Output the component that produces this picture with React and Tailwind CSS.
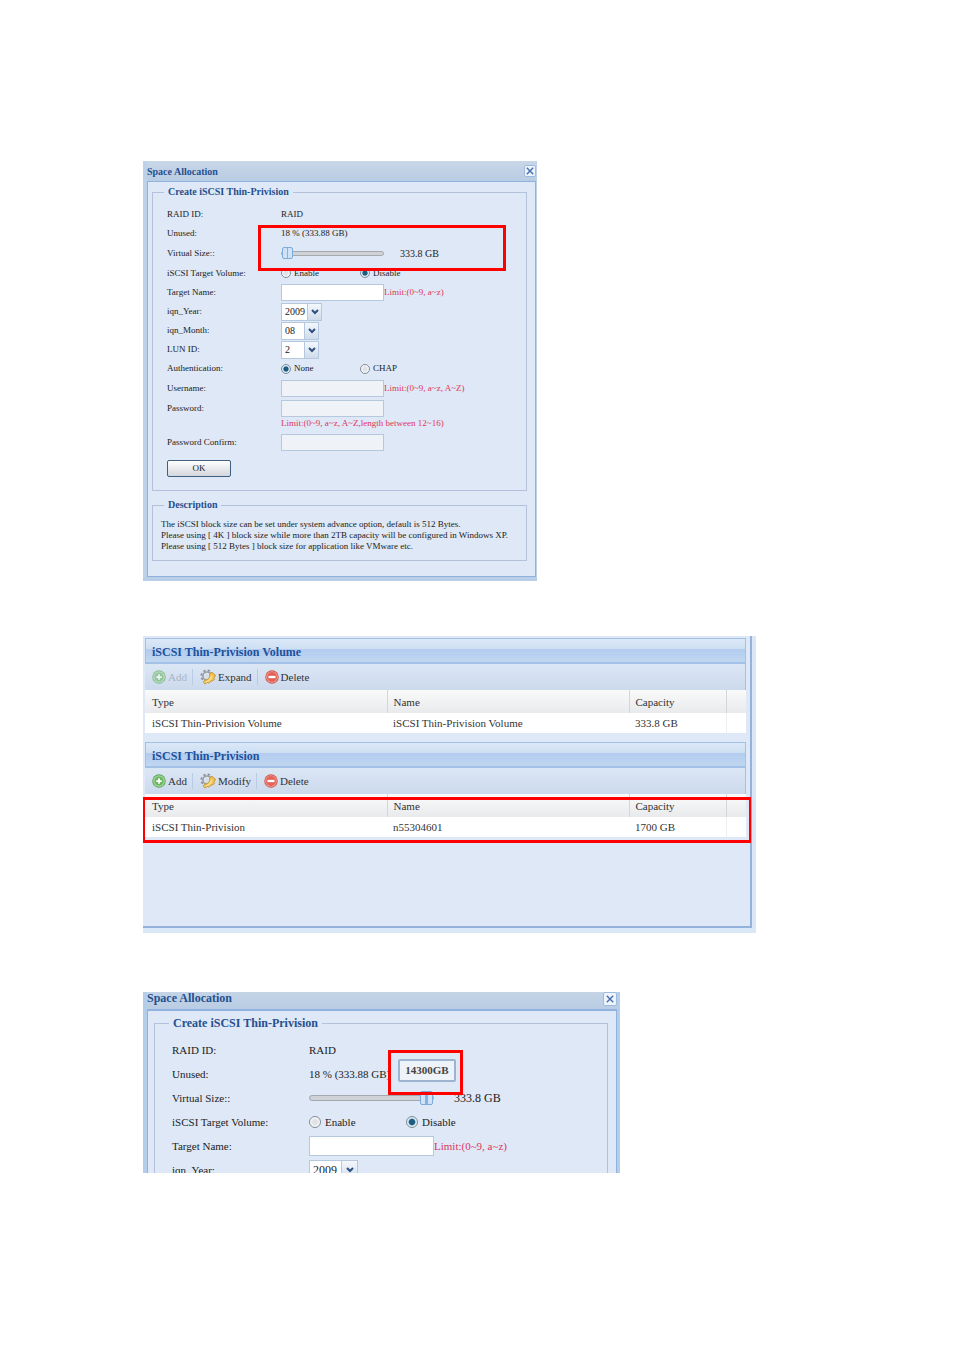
import { useId, useState } from 'react';
import clsx from 'clsx';

const CloseButton = ({ large }) => (
  <button
    type="button"
    aria-label="Close"
    className={clsx(
      'flex items-center justify-center rounded-xs border border-[#9dbbe0] bg-[#eef4fc]',
      large ? 'size-[14px]' : 'size-3'
    )}
  >
    <svg viewBox="0 0 10 10" className="size-2" fill="none" stroke="#4a6fae" strokeWidth="1.8">
      <path d="M1 1l8 8M9 1l-8 8" />
    </svg>
  </button>
);

const AddIcon = () => (
  <svg viewBox="0 0 16 16" className="size-[14px]">
    <circle cx="8" cy="8" r="7.7" fill="#5aa455" />
    <circle cx="8" cy="8" r="6.7" fill="#a5d69b" />
    <circle cx="8" cy="8" r="5.2" fill="#69b562" />
    <path d="M8 4.8v6.4M4.800 8h6.400" stroke="#fff" strokeWidth="2" />
  </svg>
);

const GearIcon = () => (
  <svg viewBox="0 0 16 16" className="size-4" fill="none">
    <circle cx="7" cy="7" r="5.6" stroke="#8d9199" strokeWidth="2" strokeDasharray="2.2 2.2" />
    <circle cx="7" cy="7" r="4" fill="#dfe3e8" stroke="#9a9ea6" strokeWidth="1.600" />
    <path
      d="M4.500 14.800c-1-.6-1.300-1.700-.6-2.700l2.300-1.300c1.700-.4 2.900-1.500 3.300-3.300l.4-3.300 2.700-.6 1 1.700 1.700.6-.3 2-1.200 1 .5 1.800-1.700 1.300-1.600-.3-1 1.700-2 .6-1-1-1 1.600z"
      fill="#f4c654"
      stroke="#c08c2c"
      strokeWidth=".8"
    />
    <path d="M6 12.800c2.600-.4 4.800-2.300 5.400-5.400" stroke="#fbe6a0" strokeWidth="1.200" />
    <circle cx="7.200" cy="7.200" r="1.700" fill="#d3deee" />
  </svg>
);

const DeleteIcon = () => (
  <svg viewBox="0 0 16 16" className="size-[14px]">
    <circle cx="8" cy="8" r="7.7" fill="#d0574c" />
    <circle cx="8" cy="8" r="6.7" fill="#f09a90" />
    <circle cx="8" cy="8" r="5.600" fill="#e2645a" />
    <path d="M4 8h8" stroke="#fff" strokeWidth="2.600" />
  </svg>
);

const Fieldset = ({ legend, large, className, children }) => (
  <fieldset className={clsx('min-w-0 border border-[#b3c1dc]', className)}>
    <legend
      className={clsx(
        'px-1 font-bold text-[#26508f]',
        large ? 'ml-[14px] text-xs leading-4' : 'ml-[11px] text-[10px] leading-[14px]'
      )}
    >
      {legend}
    </legend>
    {children}
  </fieldset>
);

const Row = ({ label, htmlFor, large, tall, children }) => (
  <div className={clsx('flex items-center', large ? 'h-6' : tall ? 'h-5' : 'h-[19px]')}>
    {htmlFor ? (
      <label htmlFor={htmlFor} className={clsx('shrink-0', large ? 'w-[137px]' : 'w-[114px]')}>
        {label}
      </label>
    ) : (
      <span className={clsx('shrink-0', large ? 'w-[137px]' : 'w-[114px]')}>{label}</span>
    )}
    {children}
  </div>
);

const TextBox = ({ large, disabled, ...props }) => (
  <input
    disabled={disabled}
    className={clsx(
      'border border-[#b5c8dd] px-1 outline-none',
      large ? 'h-5 w-[125px]' : 'h-[17px] w-[103px]',
      disabled ? 'bg-[#eff3f8]' : 'bg-white'
    )}
    {...props}
  />
);

const Dropdown = ({ id, value, wide, large }) => (
  <span
    className={clsx(
      'relative flex border border-[#b5c8dd] bg-white',
      large ? 'h-5 w-[49px] text-xs' : 'h-[18px] text-[10px]',
      !large && (wide ? 'w-[41px]' : 'w-[38px]')
    )}
  >
    <select id={id} defaultValue={value} className="w-full appearance-none bg-transparent pl-[3px] outline-none">
      <option>{value}</option>
    </select>
    <span
      className={clsx(
        'pointer-events-none absolute inset-y-0 right-0 flex items-center justify-center border-l border-[#b5c8dd] bg-linear-to-b from-[#f4f8fd] to-[#cfdcec]',
        large ? 'w-4' : 'w-[14px]'
      )}
    >
      <svg viewBox="0 0 8 6" className="h-[6px] w-2" fill="none" stroke="#2f4f7f" strokeWidth="2">
        <path d="M1 1l3 3 3-3" />
      </svg>
    </span>
  </span>
);

const RadioPair = ({ name, options, checked, large }) => {
  const [value, setValue] = useState(checked);

  return options.map((option) => (
    <label
      key={option}
      className={clsx('flex items-center', large ? 'w-[97px] gap-1' : 'w-[79px] gap-[3px]')}
    >
      <input
        type="radio"
        name={name}
        checked={value === option}
        onChange={() => setValue(option)}
        className={clsx(
          'appearance-none rounded-full border border-[#7f8c99] bg-[radial-gradient(circle,#dfe1e4_30%,#fafbfc_70%)] checked:bg-[radial-gradient(circle,#1c5c80_38%,#dcebf5_55%)]',
          large ? 'size-3' : 'size-[10px]'
        )}
      />
      {option}
    </label>
  ));
};

const SizeSlider = ({ id, value, large }) => (
  <input
    id={id}
    type="range"
    defaultValue={value}
    className={clsx(
      'appearance-none rounded-sm border border-[#a4a9b0] bg-[#cfd2d6]',
      '[&::-webkit-slider-thumb]:appearance-none [&::-webkit-slider-thumb]:rounded-xs [&::-webkit-slider-thumb]:border [&::-webkit-slider-thumb]:border-[#7fabdc]',
      '[&::-webkit-slider-thumb]:bg-[linear-gradient(90deg,#cfe3f8_40%,#86b1e0_40%,#86b1e0_60%,#cfe3f8_60%)]',
      large
        ? 'h-[6px] w-[125px] [&::-webkit-slider-thumb]:h-[14px] [&::-webkit-slider-thumb]:w-[13px]'
        : 'h-[5px] w-[103px] [&::-webkit-slider-thumb]:h-3 [&::-webkit-slider-thumb]:w-[11px]'
    )}
  />
);

const Hint = ({ children }) => <span className="whitespace-nowrap text-[#e0355a]">{children}</span>;

// Rows shared by both states of the space allocation dialog
const VolumeRows = ({ id, large, slider }) => (
  <>
    <Row label="RAID ID:" large={large} tall>RAID</Row>
    <Row label="Unused:" large={large}>18 % (333.88 GB)</Row>
    <Row label="Virtual Size::" htmlFor={`${id}-size`} large={large} tall>
      <SizeSlider id={`${id}-size`} value={slider} large={large} />
      <span className={large ? 'ml-5 text-xs' : 'ml-4 text-[10px]'}>333.8 GB</span>
    </Row>
    <Row label="iSCSI Target Volume:" large={large} tall>
      <RadioPair name={`${id}-target`} options={['Enable', 'Disable']} checked="Disable" large={large} />
    </Row>
    <Row label="Target Name:" htmlFor={`${id}-name`} large={large}>
      <TextBox id={`${id}-name`} large={large} />
      <Hint>Limit:(0~9, a~z)</Hint>
    </Row>
    <Row label="iqn_Year:" htmlFor={`${id}-year`} large={large}>
      <Dropdown id={`${id}-year`} value="2009" wide large={large} />
    </Row>
  </>
);

const AllocationDialog = () => {
  const id = useId();

  return (
    <section className="relative w-full max-w-[394px] border-b-4 border-[#b9cfe7] bg-[#bdd1e8] pr-px pl-1 text-[9px] leading-[11px]">
      <header className="flex h-5 items-center justify-between bg-linear-to-b from-[#c9d7e8] to-[#b8cce3]">
        <h2 className="text-[10px] font-bold text-[#26508f]">Space Allocation</h2>
        <CloseButton />
      </header>
      <div className="border border-[#8fb3de] bg-[#dee8f6] pt-[3px] pr-2 pb-[15px] pl-1">
        <Fieldset legend="Create iSCSI Thin-Privision" className="pb-[13px]">
          <form className="pt-[5px] pl-[14px]">
            <VolumeRows id={id} slider={0} />
            <Row label="iqn_Month:" htmlFor={`${id}-month`}>
              <Dropdown id={`${id}-month`} value="08" />
            </Row>
            <Row label="LUN ID:" htmlFor={`${id}-lun`}>
              <Dropdown id={`${id}-lun`} value="2" />
            </Row>
            <Row label="Authentication:">
              <RadioPair name={`${id}-auth`} options={['None', 'CHAP']} checked="None" />
            </Row>
            <Row label="Username:" htmlFor={`${id}-user`} tall>
              <TextBox id={`${id}-user`} disabled />
              <Hint>Limit:(0~9, a~z, A~Z)</Hint>
            </Row>
            <Row label="Password:" htmlFor={`${id}-password`} tall>
              <TextBox id={`${id}-password`} type="password" disabled />
            </Row>
            <p className="mb-1 pl-[114px]">
              <Hint>Limit:(0~9, a~z, A~Z,length between 12~16)</Hint>
            </p>
            <Row label="Password Confirm:" htmlFor={`${id}-confirm`}>
              <TextBox id={`${id}-confirm`} type="password" disabled />
            </Row>
            <button
              type="button"
              className="mt-2 block h-[17px] w-16 rounded-xs border border-[#3f5f80] bg-linear-to-b from-white to-[#d3d6dc]"
            >
              OK
            </button>
          </form>
        </Fieldset>
        <Fieldset legend="Description" className="mt-[7px] pb-2">
          <p className="pt-[7px] pl-2">
            The iSCSI block size can be set under system advance option, default is 512 Bytes.
            <br />
            Please using [ 4K ] block size while more than 2TB capacity will be configured in Windows XP.
            <br />
            Please using [ 512 Bytes ] block size for application like VMware etc.
          </p>
        </Fieldset>
      </div>
      <div className="pointer-events-none absolute top-16 left-[115px] h-[46px] w-[248px] border-3 border-[#ff0000]" />
    </section>
  );
};

const ToolbarButton = ({ icon: Icon, label, disabled }) => (
  <button
    type="button"
    disabled={disabled}
    className="flex items-center gap-[2px] disabled:text-[#a9b4c4] [&:disabled_svg]:opacity-60"
  >
    <Icon />
    {label}
  </button>
);

const Separator = () => <span className="mr-[7px] ml-[5px] h-4 w-px bg-[#b9cbe2]" />;

const VolumePanel = ({ title, action, addDisabled, row, highlight }) => (
  <section>
    <h2 className="flex h-[26px] items-center border border-b-2 border-[#a3c0e6] bg-[linear-gradient(#dbe8f8,#cddff3_45%,#b3ccef_45%,#c0d7f0)] px-[6px] pt-[2px] text-xs font-bold text-[#20509c]">
      {title}
    </h2>
    <div className="flex h-[26px] items-center border-r border-[#a3c0e6] bg-linear-to-b from-[#dce7f5] to-[#ccdaed] pl-[7px]">
      <ToolbarButton icon={AddIcon} label="Add" disabled={addDisabled} />
      <Separator />
      <ToolbarButton icon={GearIcon} label={action} />
      <Separator />
      <ToolbarButton icon={DeleteIcon} label="Delete" />
    </div>
    <div className="relative">
      <table className="w-full table-fixed border-collapse text-left">
        <colgroup>
          <col className="w-[242px]" />
          <col className="w-[242px]" />
          <col className="w-[97px]" />
          <col />
        </colgroup>
        <thead>
          <tr className="h-[23px] bg-linear-to-b from-[#fafafa] to-[#e8eaec]">
            {['Type', 'Name', 'Capacity'].map((heading) => (
              <th key={heading} className="border-r border-[#d3d6da] pl-[6px] font-normal first:pl-[7px]">
                {heading}
              </th>
            ))}
            <th />
          </tr>
        </thead>
        <tbody>
          <tr className="h-5 bg-white">
            {row.map((cell, index) => (
              <td key={index} className={clsx('pl-[6px] first:pl-[7px]', index === 2 && 'border-r border-[#edf0f3]')}>
                {cell}
              </td>
            ))}
            <td />
          </tr>
        </tbody>
      </table>
      {highlight && (
        <div className="pointer-events-none absolute top-[3px] -right-[5px] -left-[2px] h-[46px] border-x-2 border-y-3 border-[#ff0000]" />
      )}
    </div>
  </section>
);

const VolumeList = () => (
  <section className="w-full max-w-[613px] bg-[#dae7f7] pr-1 pb-[5px] text-[11px] leading-[14px] text-[#333]">
    <div className="border-r-2 border-b-2 border-[#94b2da] bg-[#dee8f6] pt-[2px] pr-1 pb-[89px] pl-[2px]">
      <VolumePanel
        title="iSCSI Thin-Privision Volume"
        action="Expand"
        addDisabled
        row={['iSCSI Thin-Privision Volume', 'iSCSI Thin-Privision Volume', '333.8 GB']}
      />
      <div className="h-[9px]" />
      <VolumePanel
        title="iSCSI Thin-Privision"
        action="Modify"
        row={['iSCSI Thin-Privision', 'n55304601', '1700 GB']}
        highlight
      />
    </div>
  </section>
);

const ResizeDialog = () => {
  const id = useId();

  return (
    <section className="relative max-h-[181px] w-full max-w-[477px] overflow-hidden bg-[#b4cde9] pr-[3px] pl-1 text-[11px] leading-[13px]">
      <header className="flex h-[17px] items-start justify-between bg-linear-to-b from-[#c5d5e7] to-[#b8cce3]">
        <h2 className="text-xs leading-3 font-bold text-[#26508f]">Space Allocation</h2>
        <CloseButton large />
      </header>
      <div className="border border-t-2 border-[#8fb3de] bg-[#dee8f6] pt-1 pr-2 pl-[6px]">
        <Fieldset legend="Create iSCSI Thin-Privision" large>
          <form className="pt-[7px] pl-[17px]">
            <VolumeRows id={id} slider={100} large />
          </form>
        </Fieldset>
      </div>
      <output
        htmlFor={`${id}-size`}
        className="absolute top-[67px] left-[255px] flex h-[23px] w-[58px] items-center justify-center rounded-xs border-2 border-[#9db4d0] bg-[#eef3fa] font-bold text-[#444]"
      >
        14300GB
      </output>
      <div className="pointer-events-none absolute top-[58px] left-[245px] h-[45px] w-[75px] border-3 border-[#ff0000]" />
    </section>
  );
};

export default function App() {
  return (
    <main className="flex flex-col bg-white pt-[161px] pr-8 pb-44 pl-[143px] font-['Liberation_Serif',serif] text-[#222]">
      <AllocationDialog />
      <div className="h-[55px]" />
      <VolumeList />
      <div className="h-[59px]" />
      <ResizeDialog />
    </main>
  );
}
